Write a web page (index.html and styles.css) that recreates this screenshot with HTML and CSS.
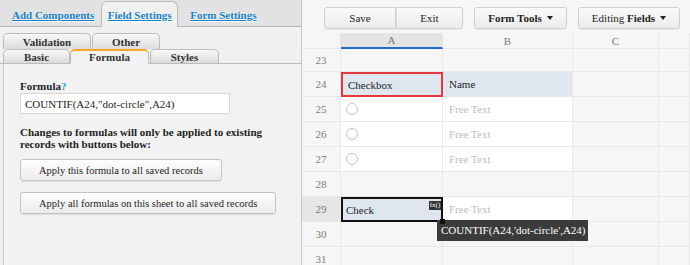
FILE: index.html
```html
<!DOCTYPE html>
<html lang="en">
<head>
	<meta charset="UTF-8">
	<title>Field Settings - Formula</title>
	<link rel="stylesheet" href="styles.css">
</head>
<body>
	<div class="todo">
		<section class="panel">
			<nav class="tabs">
				<a class="tab">Add Components</a>
				<a class="tab activo">Field Settings</a>
				<a class="tab ultima">Form Settings</a>
			</nav>
			<div class="subtabs">
				<div class="fila">
					<span class="sub w88">Validation</span>
					<span class="sub w68">Other</span>
				</div>
				<div class="fila abajo">
					<span class="sub w67">Basic</span>
					<span class="sub w79 activo">Formula</span>
					<span class="sub w69">Styles</span>
				</div>
			</div>
			<div class="contenido">
				<label class="etiqueta">Formula<span class="ayuda">?</span></label>
				<input class="formula" type="text" value='COUNTIF(A24,"dot-circle",A24)'>
				<p class="aviso">Changes to formulas will only be applied to existing<br>records with buttons below:</p>
				<button class="aplicar">Apply this formula to all saved records</button>
				<button class="aplicar">Apply all formulas on this sheet to all saved records</button>
			</div>
		</section>

		<section class="hoja">
			<div class="barra">
				<button class="btn w72 izq">Save</button>
				<button class="btn w67 der">Exit</button>
				<button class="btn w93 menu"><b>Form Tools</b></button>
				<button class="btn w102 menu">Editing <b>Fields</b></button>
			</div>
			<div class="rejilla">
				<div class="c cab"></div>
				<div class="c cab marcada">A</div>
				<div class="c cab">B</div>
				<div class="c cab">C</div>
				<div class="c cab"></div>

				<div class="c num">23</div>
				<div class="c"></div>
				<div class="c"></div>
				<div class="c"></div>
				<div class="c"></div>

				<div class="c num">24</div>
				<div class="c azul roja">Checkbox</div>
				<div class="c azul">Name</div>
				<div class="c"></div>
				<div class="c"></div>

				<div class="c num">25</div>
				<div class="c blanca"><span class="radio"></span></div>
				<div class="c blanca gris">Free Text</div>
				<div class="c"></div>
				<div class="c"></div>

				<div class="c num">26</div>
				<div class="c blanca"><span class="radio"></span></div>
				<div class="c blanca gris">Free Text</div>
				<div class="c"></div>
				<div class="c"></div>

				<div class="c num">27</div>
				<div class="c blanca"><span class="radio"></span></div>
				<div class="c blanca gris">Free Text</div>
				<div class="c"></div>
				<div class="c"></div>

				<div class="c num">28</div>
				<div class="c"></div>
				<div class="c"></div>
				<div class="c"></div>
				<div class="c"></div>

				<div class="c num actual">29</div>
				<div class="c azul negra">Check
					<span class="fx">fx()</span>
					<span class="tip">COUNTIF(A24,'dot-circle',A24)</span>
					<span class="asa"></span>
				</div>
				<div class="c blanca gris">Free Text</div>
				<div class="c"></div>
				<div class="c"></div>

				<div class="c num">30</div>
				<div class="c"></div>
				<div class="c"></div>
				<div class="c"></div>
				<div class="c"></div>

				<div class="c num">31</div>
				<div class="c"></div>
				<div class="c"></div>
				<div class="c"></div>
				<div class="c"></div>
			</div>
		</section>
	</div>
</body>
</html>
```

FILE: styles.css
```css
*{
	margin:0;
	padding:0;
	box-sizing: border-box;
}
body{
	font-family: "Liberation Serif", serif;
	font-size: 11px;
	color: #1e1e1e;
	background: #f6f6f6;
	overflow: hidden;
}
.todo{
	display: flex;
	width: 690px;
	height: 265px;
}

/* panel izquierdo */
.panel{
	width: 302px;
	background: #f0f0f0;
	border-right: 1px solid #c6c6c6;
}
.tabs{
	display: flex;
	align-items: flex-end;
	height: 27px;
	padding-left: 5px;
	background: #e2e2e2;
	border-bottom: 1px solid #b9b9b9;
}
.tab{
	height: 26px;
	line-height: 27px;
	padding: 0 6px;
	margin-bottom: -1px;
	border: 1px solid transparent;
	border-bottom: none;
	font-weight: bold;
	color: #1a7fc4;
	text-decoration: underline;
	text-shadow: 0 1px 0 #fff;
}
.tab.activo{
	width: 77px;
	padding: 0;
	text-align: center;
	background: #f0f0f0;
	border-color: #b9b9b9;
	border-radius: 6px 6px 0 0;
}
.tab.ultima{
	margin-left: 5px;
}
.subtabs{
	padding: 6px 0 0 3px;
}
.fila{
	display: flex;
	gap: 1px;
}
.fila.abajo{
	margin-left: -3px;
	padding-left: 3px;
	gap: 0;
	border-bottom: 1px solid #b9b9b9;
}
.sub{
	height: 16px;
	line-height: 16px;
	text-align: center;
	font-weight: bold;
	color: #333;
	border: 1px solid #bcbcbc;
	border-bottom: none;
	border-radius: 5px 5px 0 0;
	background: linear-gradient(#f8f8f8, #dcdcdc);
}
.abajo .sub{
	height: 15px;
	line-height: 15px;
	margin-bottom: -1px;
	border-bottom: 1px solid #bcbcbc;
}
.abajo .sub.activo{
	height: 15px;
	background: #f2f2f2;
	border-top: 2px solid #f3a628;
	border-bottom-color: #f2f2f2;
	line-height: 13px;
}
.abajo .w69{ margin-left: 1px; }
.w88{ width: 88px; }
.w68{ width: 68px; }
.w67{ width: 67px; }
.w79{ width: 79px; }
.w69{ width: 69px; }

.contenido{
	height: 201px;
	margin-left: 3px;
	padding: 16px 0 0 16px;
	background: #f2f2f2;
	border-left: 1px solid #c8c8c8;
}
.etiqueta{
	display: block;
	line-height: 12px;
	font-weight: bold;
}
.ayuda{
	color: #2a9ad8;
}
.formula{
	display: block;
	width: 210px;
	height: 21px;
	margin-top: 1px;
	padding: 0 4px;
	border: 1px solid #d8d8d8;
	background: #fff;
	font-family: "Liberation Serif", serif;
	font-size: 11px;
	color: #1e1e1e;
	outline: none;
}
.aviso{
	margin-top: 12px;
	line-height: 12px;
	font-weight: bold;
}
.aplicar{
	display: block;
	height: 22px;
	margin-top: 9px;
	padding: 0 18px;
	font-family: "Liberation Serif", serif;
	font-size: 10.5px;
	color: #1e1e1e;
	border: 1px solid #c4c4c4;
	border-radius: 3px;
	background: linear-gradient(#fefefe, #ebebeb);
	box-shadow: 0 1px 1px rgba(0,0,0,.08);
}
.aplicar + .aplicar{
	margin-top: 11px;
}

/* hoja */
.hoja{
	flex: 1;
	background: #f6f6f6;
}
.barra{
	display: flex;
	height: 33px;
	padding: 7px 0 0 22px;
}
.btn{
	height: 22px;
	font-family: "Liberation Serif", serif;
	font-size: 11px;
	color: #1e1e1e;
	border: 1px solid #d0d0d0;
	border-radius: 3px;
	background: linear-gradient(#fafafa, #ececec);
	box-shadow: 0 1px 1px rgba(0,0,0,.05);
}
.btn.izq{ border-radius: 3px 0 0 3px; }
.btn.der{ border-radius: 0 3px 3px 0; border-left-color: #dcdcdc; margin-right: 11px; }
.btn.w93{ margin-right: 11px; }
.btn.menu::after{
	content: "";
	display: inline-block;
	margin-left: 5px;
	vertical-align: 2px;
	border-left: 3px solid transparent;
	border-right: 3px solid transparent;
	border-top: 4px solid #222;
}
.w72{ width: 72px; }
.w93{ width: 93px; }
.w102{ width: 102px; }

.rejilla{
	display: grid;
	grid-template-columns: 39px 102px 130px 86px 1fr;
	grid-template-rows: 16px 23px repeat(8, 25px);
}
.c{
	display: flex;
	align-items: center;
	padding-left: 6px;
	border-right: 1px solid #e8e8e8;
	border-bottom: 1px solid #e8e8e8;
	white-space: nowrap;
}
.cab{
	justify-content: center;
	padding: 0;
	color: #777;
}
.cab.marcada{
	background: #e4e4e4;
	border-bottom: 2px solid #2767c9;
}
.num{
	justify-content: center;
	padding: 0;
	color: #7d7d7d;
}
.num.actual{
	background: #e5e5e5;
}
.azul{
	background: #dfe6ee;
}
.blanca{
	background: #fff;
}
.gris{
	color: #bdbdbd;
}
.roja{
	border: 2px solid #e2373f;
	padding-left: 5px;
}
.radio{
	width: 12px;
	height: 12px;
	margin-left: -1px;
	border: 1px solid #c3c3c3;
	border-radius: 50%;
	background: #fff;
}
.negra{
	position: relative;
	z-index: 2;
	border: 2px solid #111;
	padding-left: 3px;
}
.fx{
	position: absolute;
	top: 2px;
	right: 0;
	width: 12px;
	height: 9px;
	line-height: 9px;
	text-align: center;
	font-size: 7px;
	color: #fff;
	background: #333;
}
.tip{
	position: absolute;
	top: 21px;
	left: 94px;
	width: 151px;
	height: 21px;
	line-height: 21px;
	padding-left: 4px;
	color: #fff;
	background: #3b3b3b;
}
.asa{
	position: absolute;
	top: 20px;
	left: 97px;
	width: 5px;
	height: 5px;
	background: #111;
}
```
